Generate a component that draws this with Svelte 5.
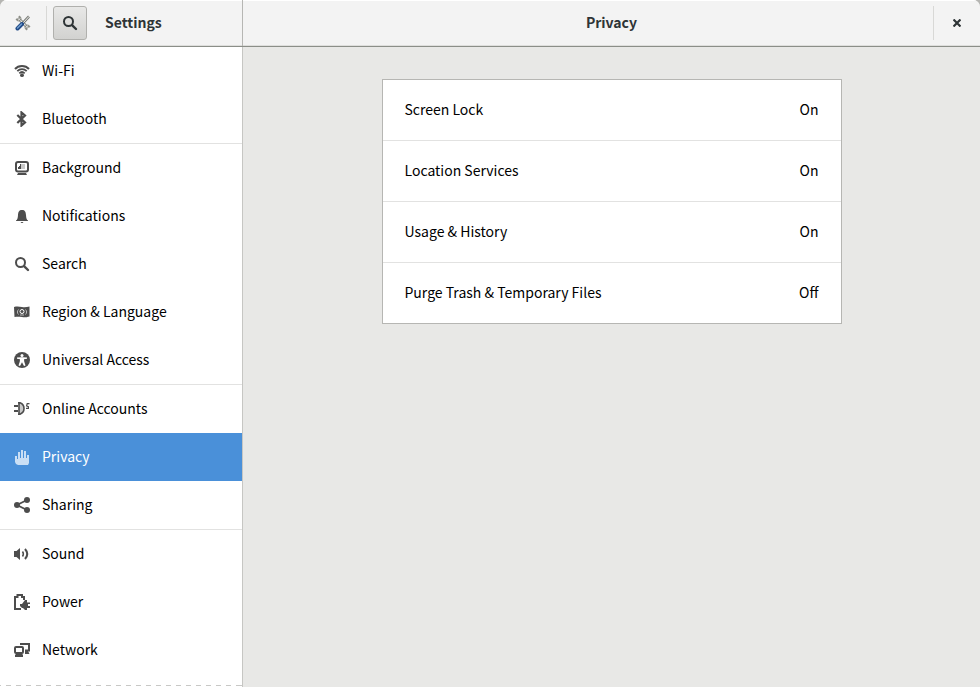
<script>
  const groups = [
    ['Wi-Fi', 'Bluetooth'],
    ['Background', 'Notifications', 'Search', 'Region & Language', 'Universal Access'],
    ['Online Accounts', 'Privacy', 'Sharing'],
    ['Sound', 'Power', 'Network']
  ];
  const settings = [
    ['Screen Lock', 'On'],
    ['Location Services', 'On'],
    ['Usage & History', 'On'],
    ['Purge Trash & Temporary Files', 'Off']
  ];
  let selected = $state('Privacy');
</script>

{#snippet icon(name)}
  <svg class="icon" viewBox="0 0 16 16" aria-hidden="true">
    {#if name === 'Wi-Fi'}
      <path class="line" stroke-width="2" d="M1 6C4.500 2 11.500 2 15 6" />
      <path class="line" stroke-width="1.800" d="M3.300 8.200C6 5.400 10 5.400 12.700 8.200" />
      <path class="line" stroke-width="1.800" d="M5.300 10.300C7 8.700 9 8.700 10.700 10.300" />
      <circle cx="8" cy="12.200" r="1.900" />
    {:else if name === 'Bluetooth'}
      <path class="line" stroke-width="2.200" d="M3.300 4L11 11.500L7.500 14.500V1.500L11 4.500L3.300 12" />
    {:else if name === 'Background'}
      <rect class="line" stroke-width="2" x="2" y="2" width="12" height="9.500" rx="2" />
      <path opacity=".3" d="M7 4h4v5H7z" />
      <path d="M4 9V7h1V6h1V4h1v5zM4 13h8l1 2H3z" />
    {:else if name === 'Notifications'}
      <path d="M8 2C5 2 4.200 4 4 7C3.800 10 3.500 11.500 2 12.500V13H14V12.500C12.500 11.500 12.200 10 12 7C11.800 4 11 2 8 2M6.500 14h3l-1 1h-1z" />
    {:else if name === 'Search'}
      <circle class="line" stroke-width="2" cx="6.500" cy="6.500" r="4.500" />
      <path class="line" stroke-width="2.400" stroke-linecap="round" d="M10.300 10.300L14 14" />
    {:else if name === 'Region & Language'}
      <path d="M0 3C3 2.200 5 2.500 8 3C11 3.500 13 3 15.500 2.500V12.500C12 13.500 10 13.500 8 13C5 12.500 3 12.500 0.500 13z" />
      <circle cx="8" cy="7.500" r="2" fill="none" stroke="#fff" />
      <path d="M4.500 5.500C3 7 3 9 4.500 10.500M11.500 5.500C13 7 13 9 11.500 10.500M6 11h4" fill="none" stroke="#bbb" />
    {:else if name === 'Universal Access'}
      <circle cx="8" cy="8" r="8" />
      <circle cx="8" cy="3.500" r="1.500" fill="#fff" />
      <path fill="#fff" d="M3 5.500L7 5.300H9L13 5.500V6.800L10 7.300L10.200 9.500L11.500 13.500L10 14L8 10.300L6 14L4.500 13.500L5.800 9.500L6 7.300L3 6.800z" />
    {:else if name === 'Online Accounts'}
      <path opacity=".3" d="M5 2h3l2 3v5l-2 3H5z" />
      <path class="line" stroke-width="2" d="M0 5h4M0 10h4" />
      <path class="line" stroke-width="1.600" d="M4 1.800H6C9 3 10 5 10 7.500S9 12 6 13.200H4M5 2v11" />
      <path class="line" stroke-width="1.200" d="M15.500 2.700H13.200L12.600 5L14.400 5.700V7.400H12" />
    {:else if name === 'Privacy'}
      <path d="M1 7h2v3h1V3h2v6h1V1h2v8h1V2h2v7h1V6h2v8l-1 2H4l-2-1-1-2z" />
    {:else if name === 'Sharing'}
      <path class="line" stroke-width="1.800" d="M13 3L3 8L13 13" />
      <circle cx="3" cy="8" r="3" /><circle cx="13" cy="3" r="3" /><circle cx="13" cy="13" r="3" />
    {:else if name === 'Sound'}
      <path d="M0 5h2.500L6 2v12L2.500 11H0z" />
      <path class="line" stroke-width="1.500" d="M8.500 5.500Q10.300 8 8.500 10.500" />
      <path class="line" stroke-width="2" d="M11 3Q15.500 8 11 13" />
    {:else if name === 'Power'}
      <path class="line" stroke-width="2" d="M7 15H1V3H3.500V1H8V3H10V6" />
      <path d="M13 6v2.500h3v1.500h-2v2h2v2h-3v2h-2l-2-2H8l-2-2v-2h2l3-4z" />
    {:else if name === 'Network'}
      <path class="line" stroke-width="2" d="M6 2H15V8.500H11" />
      <rect class="line" stroke-width="2" x="1" y="5" width="8" height="6" rx="1" />
      <path d="M3 11h4.500l1.500 2v2H1V13zM11 9h3l1.500 3h-4.500z" />
    {/if}
  </svg>
{/snippet}

<div class="window">
  <header>
    <div class="side-head">
      <svg class="tools" viewBox="0 0 16 16" aria-hidden="true">
        <path d="M3 3L13 13" stroke="#777a74" stroke-width="3" />
        <path d="M3 3L13 13" stroke="#e5e5e0" stroke-width="1.200" />
        <path d="M1 4a2.500 2.500 0 1 0 3-3L4.500 3L3 4.500z" fill="#ddd" stroke="#85877f" />
        <path d="M12 15a2.500 2.500 0 1 1 3-3L13 11.500L11.500 13z" fill="#ddd" stroke="#85877f" />
        <path d="M7 9L14 1.500" stroke="#777a74" stroke-width="2.600" />
        <path d="M8 8L14 1.500" stroke="#eee" stroke-width="1" />
        <path d="M2.500 13.500L7 9" stroke="#204a87" stroke-width="4" stroke-linecap="round" />
        <path d="M2.500 13L6.500 9" stroke="#729fcf" stroke-width="1.500" stroke-linecap="round" />
      </svg>
      <span class="rule"></span>
      <button class="find" aria-label="Search settings">{@render icon('Search')}</button>
      <h1>Settings</h1>
    </div>
    <div class="main-head">
      <h2>Privacy</h2>
      <button class="close" aria-label="Close">
        <svg viewBox="0 0 8 8" aria-hidden="true"><path d="M.5 .5L7.500 7.500M7.500 .5L.5 7.500" stroke="#2e3436" stroke-width="2.200" /></svg>
      </button>
    </div>
  </header>
  <div class="body">
    <nav>
      {#each groups as group}
        <ul>
          {#each group as name}
            <li>
              <button class="item" class:selected={selected === name} onclick={() => (selected = name)}>
                {@render icon(name)}<span>{name}</span>
              </button>
            </li>
          {/each}
        </ul>
      {/each}
      <div class="more"></div>
    </nav>
    <main>
      <div class="panel">
        {#each settings as [label, value]}
          <button class="row"><span>{label}</span><span>{value}</span></button>
        {/each}
      </div>
    </main>
  </div>
</div>

<style>
  :global(body) { background: #b5b5b2; }
  .window {
    display: flex;
    flex-direction: column;
    height: 100vh;
    overflow: hidden;
    border-radius: 7px 7px 0 0;
    background: #e8e8e6;
    color: #000;
    font: 14px/20px "Noto Sans CJK SC", "Noto Sans", sans-serif;
  }
  button {
    margin: 0;
    padding: 0;
    border: 0;
    background: none;
    color: inherit;
    font: inherit;
  }
  header {
    display: flex;
    flex: none;
    height: 47px;
    box-sizing: border-box;
    border-bottom: 1px solid #8b8e88;
    background: #f3f3f3;
    color: #2e3436;
    box-shadow: inset 0 1px #fff, inset 0 -1px #dededc;
  }
  .side-head {
    display: flex;
    align-items: center;
    box-sizing: border-box;
    width: 243px;
    padding-left: 15px;
    border-right: 1px solid #b6b6b3;
  }
  .tools { width: 16px; height: 16px; fill: none; }
  .rule { width: 1px; height: 34px; margin: 0 6px 0 15px; background: #d8d8d6; }
  .find {
    display: grid;
    place-items: center;
    box-sizing: border-box;
    width: 34px;
    height: 34px;
    border: 1px solid #b0b0ad;
    border-radius: 3px;
    background: linear-gradient(#e8e8e7, #d2d2d0);
  }
  .find .icon { color: #2e3436; }
  h1, h2 { margin: 0; font-size: 14px; line-height: 20px; font-weight: 700; }
  h1, h2, .item span, .row span { padding-bottom: 2px; }
  h1 { margin-left: 18px; }
  .main-head {
    display: grid;
    flex: 1;
    grid-template-columns: 47px 1fr 47px;
    align-items: center;
  }
  h2 { grid-column: 2; text-align: center; }
  .close {
    display: grid;
    place-items: center;
    height: 34px;
    border-left: 1px solid #d8d8d6;
  }
  .close svg { width: 8px; height: 8px; }
  .icon { flex: none; width: 16px; height: 16px; fill: currentColor; color: #4d4d4d; }
  .icon .line { fill: none; stroke: currentColor; }
  .body { display: flex; flex: 1; min-height: 0; }
  nav {
    display: flex;
    flex: none;
    flex-direction: column;
    box-sizing: border-box;
    width: 243px;
    overflow: hidden;
    border-right: 1px solid #c6c6c3;
    background: #fff;
  }
  ul { flex: none; margin: 0; padding: 0; list-style: none; }
  ul + ul { border-top: 1px solid #e2e2e1; }
  .item {
    display: flex;
    align-items: center;
    gap: 12px;
    width: 100%;
    height: 48px;
    padding: 0 14px;
    text-align: left;
  }
  .selected { background: #4a90d9; color: #fff; }
  .selected .icon { color: #cadff5; }
  .more {
    flex: none;
    height: 1px;
    margin-top: auto;
    margin-bottom: 1px;
    background: repeating-linear-gradient(90deg, #c8c8c6 0 5px, transparent 5px 10px) -4px 0;
  }
  main { flex: 1; padding: 32px; }
  .panel {
    max-width: 458px;
    margin: 0 auto;
    border: 1px solid #b6b6b3;
    background: #fff;
  }
  .row {
    display: flex;
    align-items: center;
    justify-content: space-between;
    width: 100%;
    height: 60px;
    padding: 0 22px;
  }
  .row + .row { height: 61px; border-top: 1px solid #e2e2e1; }
</style>
